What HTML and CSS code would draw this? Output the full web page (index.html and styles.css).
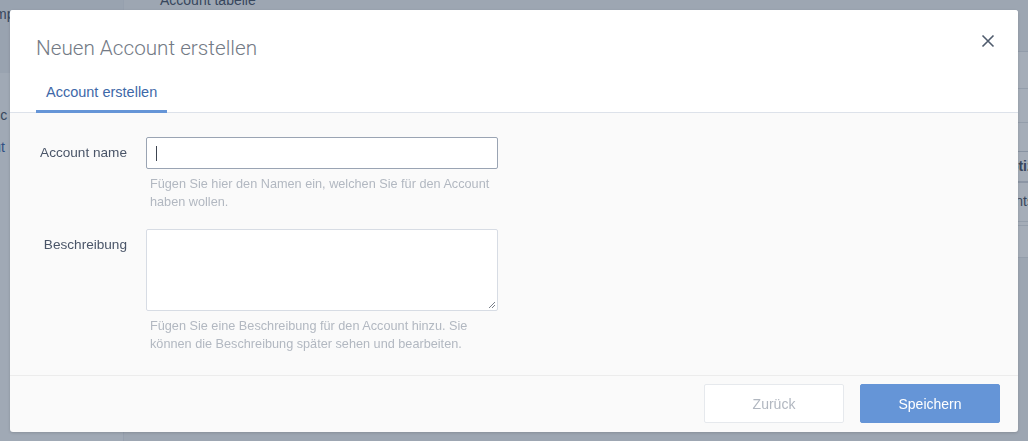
FILE: index.html
```html
<!DOCTYPE html>
<html lang="de">
<head>
    <meta charset="UTF-8">
    <meta name="viewport" content="width=device-width, initial-scale=1.0">
    <title>Neuen Account erstellen</title>
    <link rel="stylesheet" href="styles.css">
</head>
<body>
    <div class="app">
        <aside class="sidebar">
            <div class="sidebar-head"><span>Komp</span></div>
            <div class="sidebar-list">
                <div class="sidebar-item"><span>Acc</span></div>
                <div class="sidebar-item active"><span>Aut</span></div>
            </div>
        </aside>
        <main class="main">
            <div class="page-title"><span>Account tabelle</span></div>
            <div class="table">
                <div class="row r1"></div>
                <div class="row r2"></div>
                <div class="row r3"></div>
                <div class="row head"><span>Notiz</span></div>
                <div class="row r5"><span>Accounts</span></div>
                <div class="row r6"></div>
                <div class="row r7"></div>
            </div>
        </main>
    </div>

    <div class="overlay"></div>

    <div class="modal">
        <div class="modal-header">
            <h2 class="modal-title">Neuen Account erstellen</h2>
            <button class="close" aria-label="Schließen">
                <svg width="14" height="14" viewBox="0 0 14 14">
                    <path d="M1.5 1.5 L12.5 12.5 M12.5 1.5 L1.5 12.5" stroke="#4f5b6d" stroke-width="1.6" fill="none"/>
                </svg>
            </button>
            <div class="tabs">
                <div class="tab active">Account erstellen</div>
            </div>
        </div>

        <div class="modal-body">
            <div class="field">
                <label class="label">Account name</label>
                <div class="control">
                    <div class="input focus"><span class="caret"></span></div>
                    <p class="help">Fügen Sie hier den Namen ein, welchen Sie für den Account haben wollen.</p>
                </div>
            </div>
            <div class="field">
                <label class="label">Beschreibung</label>
                <div class="control">
                    <div class="textarea">
                        <svg class="grip" width="8" height="8" viewBox="0 0 8 8">
                            <path d="M7 1 L1 7 M7 4 L4 7" stroke="#7a808a" stroke-width="1"/>
                        </svg>
                    </div>
                    <p class="help">Fügen Sie eine Beschreibung für den Account hinzu. Sie können die Beschreibung später sehen und bearbeiten.</p>
                </div>
            </div>
        </div>

        <div class="modal-footer">
            <button class="btn btn-back">Zurück</button>
            <button class="btn btn-save">Speichern</button>
        </div>
    </div>
</body>
</html>
```

FILE: styles.css
```css
html, body {
    margin: 0;
    height: 100%;
    overflow: hidden;
}
body {
    font-family: "Liberation Sans", Arial, sans-serif;
    background: #f4f5f7;
    color: #4a5568;
}

/* app behind the dialog */
.app {
    display: flex;
    height: 441px;
}
.sidebar {
    width: 123px;
    border-right: 1px solid #e6e9ee;
    background: #f7f8fa;
    overflow: hidden;
}
.sidebar-head {
    height: 73px;
    background: #eceef2;
    font-size: 14px;
}
.sidebar-head span {
    display: block;
    margin-left: -22px;
    padding-top: 6px;
}
.sidebar-list {
    padding-top: 26px;
}
.sidebar-item {
    height: 32px;
    font-size: 14px;
    line-height: 32px;
    color: #4a5568;
    white-space: nowrap;
}
.sidebar-item span {
    display: block;
    margin-left: -16px;
}
.sidebar-item.active {
    color: #3d64a8;
}
.main {
    flex: 1;
    background: #f2f4f6;
}
.page-title {
    height: 51px;
    padding-left: 36px;
    font-size: 14px;
    border-bottom: 1px solid #dfe3e8;
}
.page-title span {
    display: block;
    line-height: 0;
}
.table {
    background: #fff;
}
.row {
    box-sizing: border-box;
    border-bottom: 1px solid #e3e6ea;
    font-size: 14px;
    text-align: right;
    overflow: hidden;
    white-space: nowrap;
}
.row span {
    display: inline-block;
    margin-right: -6px;
}
.r1 { height: 37px; }
.r2 { height: 34px; }
.r3 { height: 29px; border-bottom-color: #cfd4db; }
.row.head {
    height: 31px;
    line-height: 28px;
    font-weight: bold;
    border-bottom: 2px solid #d5d9df;
}
.r5 { height: 39px; line-height: 36px; }
.r6 { height: 4px; }
.r7 { height: 32px; }

.overlay {
    position: fixed;
    inset: 0;
    background: rgba(30, 50, 78, 0.4);
}

/* dialog */
.modal {
    position: absolute;
    left: 10px;
    top: 10px;
    width: 1008px;
    height: 422px;
    display: flex;
    flex-direction: column;
    background: #fafafa;
    border-radius: 3px;
    box-shadow: 0 1px 3px rgba(0, 0, 0, 0.15);
    overflow: hidden;
}
.modal-header {
    position: relative;
    background: #fff;
    padding: 24px 26px 0;
    border-bottom: 1px solid #dde2ea;
}
.modal-title {
    margin: 0;
    font-family: "Roboto", "Liberation Sans", sans-serif;
    font-weight: 300;
    font-size: 20.7px;
    line-height: 28px;
    color: #737a85;
}
.close {
    position: absolute;
    right: 23px;
    top: 24px;
    padding: 0;
    border: 0;
    background: none;
    cursor: pointer;
}
.tabs {
    display: flex;
    margin-top: 20px;
    margin-bottom: -1px;
}
.tab {
    padding: 0 10px 8px;
    font-size: 14.5px;
    line-height: 20px;
    color: #3e68a8;
    border-bottom: 3px solid transparent;
}
.tab.active {
    border-bottom-color: #6595d7;
}

.modal-body {
    flex: 1;
    padding: 24px 26px 0;
}
.field {
    display: grid;
    grid-template-columns: 91px 352px;
    column-gap: 19px;
    margin-bottom: 18px;
}
.label {
    text-align: right;
    font-size: 13.6px;
    line-height: 32px;
    color: #4a5568;
}
.input,
.textarea {
    box-sizing: border-box;
    background: #fff;
    border: 1px solid #d7dce4;
    border-radius: 2px;
}
.input {
    height: 32px;
    padding: 8px 9px;
}
.input.focus {
    border-color: #9aa4b3;
}
.caret {
    display: block;
    width: 1px;
    height: 15px;
    background: #3c4450;
}
.textarea {
    position: relative;
    height: 82px;
}
.grip {
    position: absolute;
    right: 1px;
    bottom: 1px;
}
.help {
    margin: 6px 0 0;
    padding-left: 4px;
    font-size: 12.7px;
    line-height: 18px;
    color: #b2b8c1;
}

.modal-footer {
    display: flex;
    justify-content: flex-end;
    gap: 16px;
    padding: 8px 18px 9px;
    border-top: 1px solid #ececec;
}
.btn {
    width: 140px;
    height: 39px;
    border-radius: 2px;
    font-family: "Liberation Sans", Arial, sans-serif;
    font-size: 14px;
    cursor: pointer;
}
.btn-back {
    background: #fff;
    border: 1px solid #e6e9ed;
    color: #b1b7c0;
}
.btn-save {
    background: #6595d7;
    border: 1px solid #6595d7;
    color: #fff;
}
```
